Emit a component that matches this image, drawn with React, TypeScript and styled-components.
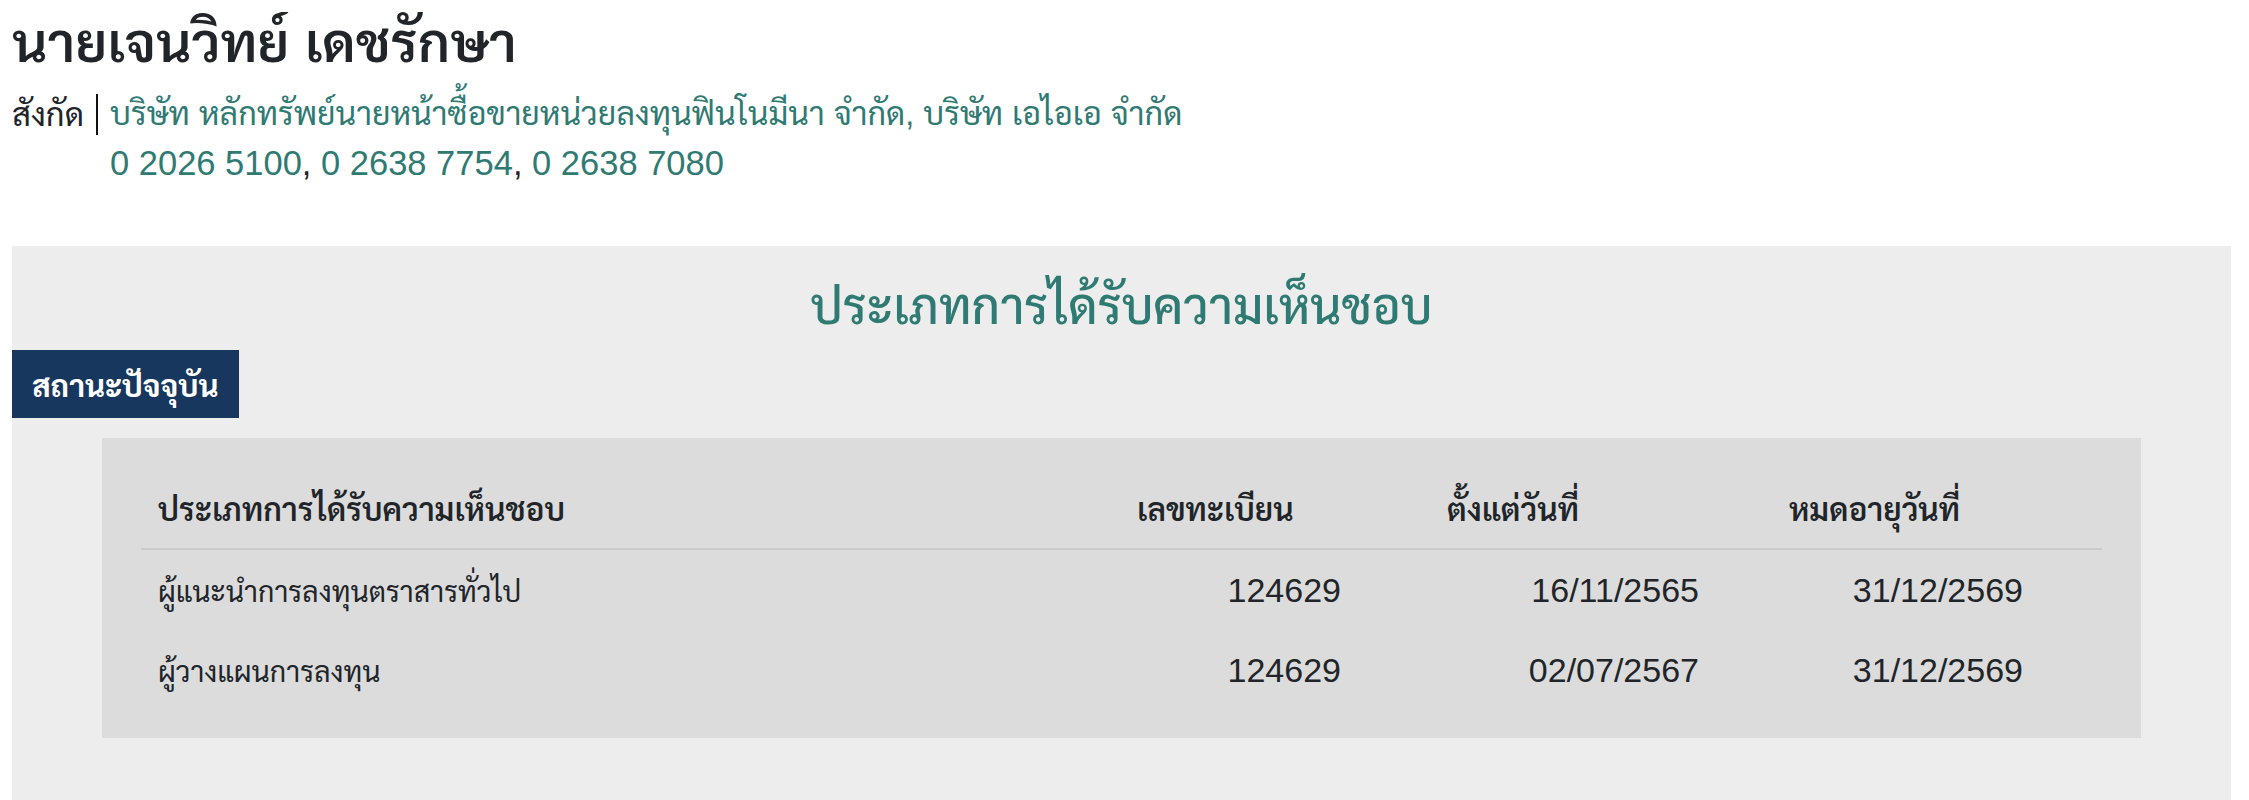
import React from "react";
import styled, { createGlobalStyle } from "styled-components";

const GlobalStyle = createGlobalStyle`
  html, body { margin: 0; padding: 0; background: #ffffff; }
  body {
    margin: 12px 18px 0 12px;
    font-family: "Liberation Sans", "Sarabun", sans-serif;
    color: #212529;
  }
`;

const Page = styled.div`
  display: flex;
  flex-direction: column;
`;

const Name = styled.h1`
  margin: 0;
  font-size: 55px;
  font-weight: 600;
  line-height: 62px;
  color: #212529;
`;

const Affiliation = styled.div`
  display: grid;
  grid-template-columns: auto 1fr;
  grid-template-rows: auto auto;
  margin-top: 16px;
  line-height: 49px;
`;

const Label = styled.span`
  font-size: 32.7px;
  padding-right: 12px;
  border-right: 2px solid #111111;
  line-height: 41px;
  align-self: center;
`;

const Values = styled.div<{ $row: number; $size: number }>`
  grid-column: 2;
  grid-row: ${(p) => p.$row};
  padding-left: 12px;
  font-size: ${(p) => p.$size}px;
  color: #212529;
`;

const Link = styled.a`
  color: #2f7a72;
  text-decoration: none;
`;

const Panel = styled.section`
  margin-top: 58px;
  background: #ededed;
  padding: 31px 0 90px;
  display: flex;
  flex-direction: column;
`;

const Heading = styled.h2`
  margin: 0;
  text-align: center;
  color: #2f7a72;
  font-size: 49px;
  font-weight: 500;
  line-height: 60px;
`;

const TabButton = styled.div`
  align-self: flex-start;
  margin-top: 13px;
  background: #17375f;
  color: #ffffff;
  font-size: 31px;
  font-weight: 700;
  height: 68px;
  padding: 0 20px;
  display: flex;
  align-items: center;
`;

const TableBox = styled.div`
  margin: 20px 90px 0;
  background: #dcdcdc;
  padding: 30px 39px 28px;
`;

const Row = styled.div<{ $header?: boolean }>`
  display: grid;
  grid-template-columns: 979px 310px 342px 1fr;
  height: 80px;
  align-items: center;
  font-size: ${(p) => (p.$header ? 31.7 : 34)}px;
  font-weight: ${(p) => (p.$header ? 600 : 400)};
  border-bottom: ${(p) => (p.$header ? "2px solid #cacaca" : "none")};
`;

const HeadCell = styled.div`
  padding-left: 17px;
`;

const TypeCell = styled.div`
  padding-left: 17px;
  font-size: 28.6px;
`;

const NumCell = styled.div<{ $pr: number }>`
  text-align: right;
  padding-right: ${(p) => p.$pr}px;
`;

const rows = [
  { type: "ผู้แนะนำการลงทุนตราสารทั่วไป", reg: "124629", from: "16/11/2565", to: "31/12/2569" },
  { type: "ผู้วางแผนการลงทุน", reg: "124629", from: "02/07/2567", to: "31/12/2569" },
];

export default function App() {
  return (
    <Page>
      <GlobalStyle />
      <Name>นายเจนวิทย์ เดชรักษา</Name>
      <Affiliation>
        <Label>สังกัด</Label>
        <Values $row={1} $size={32.4}>
          <Link href="#">บริษัท หลักทรัพย์นายหน้าซื้อขายหน่วยลงทุนฟินโนมีนา จำกัด</Link>
          <Link href="#">, บริษัท เอไอเอ จำกัด</Link>
        </Values>
        <Values $row={2} $size={34.5}>
          <Link href="#">0 2026 5100</Link>, <Link href="#">0 2638 7754</Link>,{" "}
          <Link href="#">0 2638 7080</Link>
        </Values>
      </Affiliation>
      <Panel>
        <Heading>ประเภทการได้รับความเห็นชอบ</Heading>
        <TabButton>สถานะปัจจุบัน</TabButton>
        <TableBox>
          <Row $header>
            <HeadCell>ประเภทการได้รับความเห็นชอบ</HeadCell>
            <HeadCell>เลขทะเบียน</HeadCell>
            <HeadCell>ตั้งแต่วันที่</HeadCell>
            <HeadCell>หมดอายุวันที่</HeadCell>
          </Row>
          {rows.map((r, i) => (
            <Row key={i}>
              <TypeCell>{r.type}</TypeCell>
              <NumCell $pr={89}>{r.reg}</NumCell>
              <NumCell $pr={73}>{r.from}</NumCell>
              <NumCell $pr={79}>{r.to}</NumCell>
            </Row>
          ))}
        </TableBox>
      </Panel>
    </Page>
  );
}
